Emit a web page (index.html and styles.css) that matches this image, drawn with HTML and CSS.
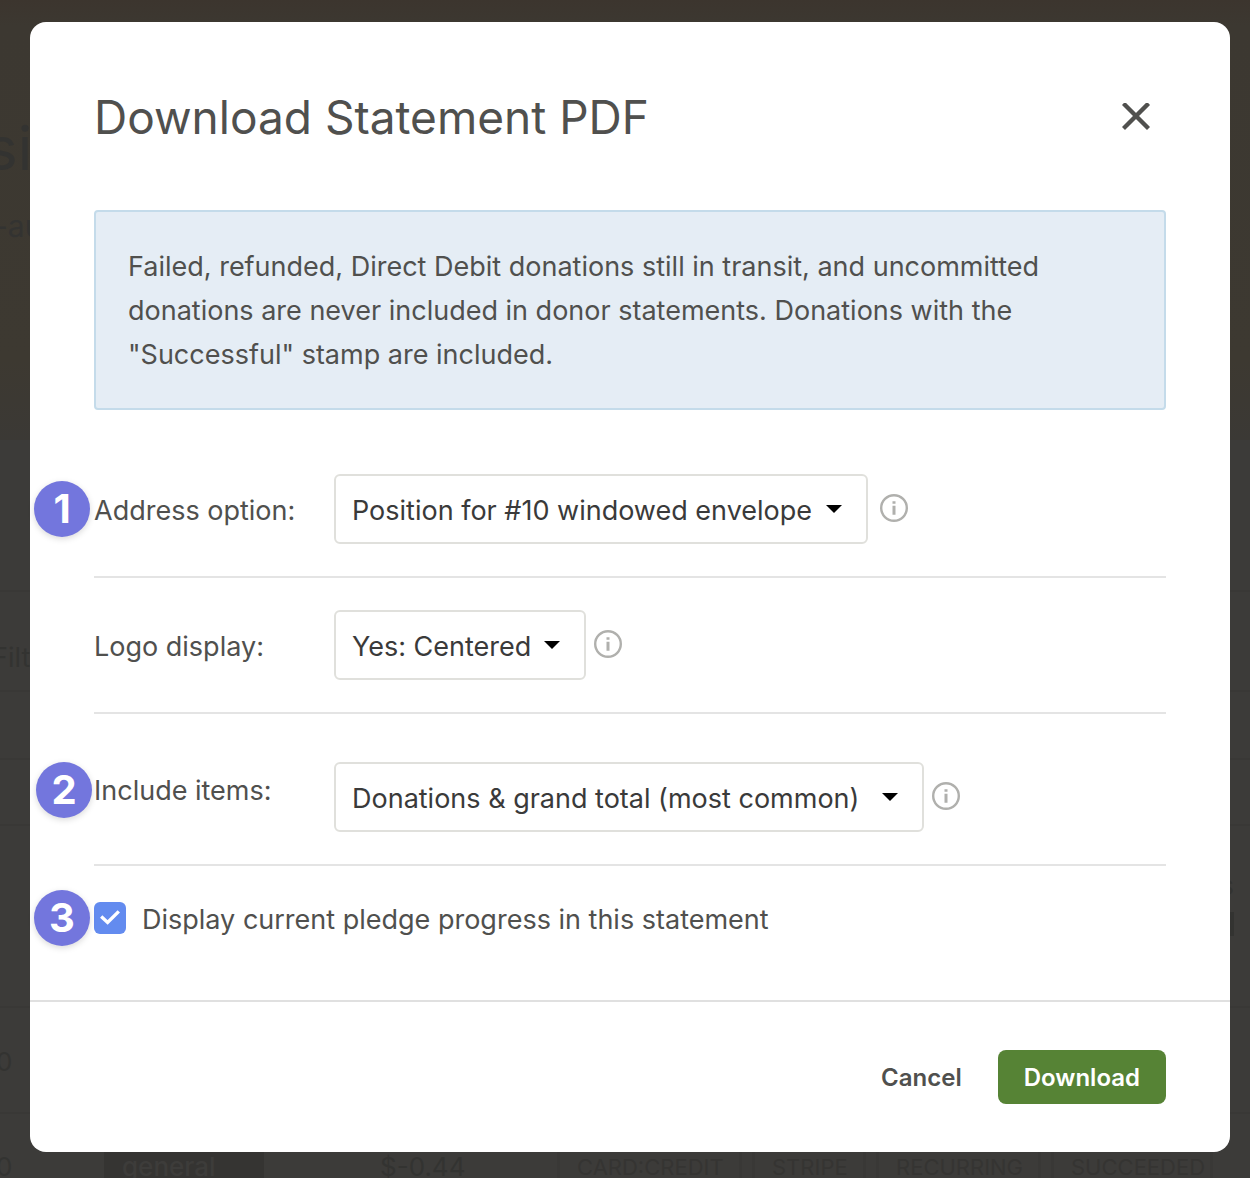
FILE: index.html
```html
<!DOCTYPE html>
<html lang="en">
<head>
<meta charset="utf-8">
<title>Download Statement PDF</title>
<link rel="stylesheet" href="styles.css">
</head>
<body>
<div class="screen">
  <div class="behind" aria-hidden="true">
    <div class="hero">
      <div class="hero-title">si</div>
      <div class="hero-sub">-au</div>
    </div>
    <div class="band band-filter">Filt</div>
    <div class="band band-tabs"></div>
    <div class="band band-head"></div>
    <div class="band band-summary"><span>s</span><span class="bar"></span></div>
    <div class="band band-row">0</div>
    <div class="band band-last">
      <span>0</span>
      <span class="fund">general</span>
      <span class="amount">$-0.44</span>
      <span class="tag">CARD:CREDIT</span>
      <span class="tag">STRIPE</span>
      <span class="tag">RECURRING</span>
      <span class="tag">SUCCEEDED</span>
    </div>
  </div>

  <form class="dialog" role="dialog" aria-labelledby="dialog-title">
    <header class="dialog-head">
      <h1 id="dialog-title">Download Statement PDF</h1>
      <button class="close" type="button" aria-label="Close">
        <svg width="28" height="28" viewBox="0 0 28 28"><path d="M3 2 25 24M25 2 3 24" fill="none" stroke="currentColor" stroke-width="4.4" stroke-linecap="square" stroke-linejoin="round"/></svg>
      </button>
    </header>

    <div class="dialog-body">
      <p class="notice">Failed, refunded, Direct Debit donations still in transit, and uncommitted donations are never included in donor statements. Donations with the "Successful" stamp are included.</p>

      <div class="row">
        <span class="step">1</span>
        <label class="row-label" for="address">Address option:</label>
        <div class="picker picker-address">
          <select id="address"><option>Position for #10 windowed envelope</option></select>
          <svg class="caret" width="16" height="8" viewBox="0 0 16 8"><path d="M0 0H16L8 8Z"/></svg>
        </div>
        <button class="info info-wide" type="button" aria-label="About address option">
          <svg width="28" height="28" viewBox="0 0 28 28"><circle cx="14" cy="14" r="12.8" fill="none" stroke="currentColor" stroke-width="2.4"/><path d="M12.5 7.2h3v2.6h-3zM12.5 11.8h3v9h-3z" fill="currentColor"/></svg>
        </button>
      </div>

      <div class="row">
        <label class="row-label" for="logo">Logo display:</label>
        <div class="picker picker-logo">
          <select id="logo"><option>Yes: Centered</option></select>
          <svg class="caret" width="16" height="8" viewBox="0 0 16 8"><path d="M0 0H16L8 8Z"/></svg>
        </div>
        <button class="info" type="button" aria-label="About logo display">
          <svg width="28" height="28" viewBox="0 0 28 28"><circle cx="14" cy="14" r="12.8" fill="none" stroke="currentColor" stroke-width="2.4"/><path d="M12.5 7.2h3v2.6h-3zM12.5 11.8h3v9h-3z" fill="currentColor"/></svg>
        </button>
      </div>

      <div class="row row-items">
        <span class="step">2</span>
        <label class="row-label" for="items">Include items:</label>
        <div class="picker picker-items">
          <select id="items"><option>Donations &amp; grand total (most common)</option></select>
          <svg class="caret" width="16" height="8" viewBox="0 0 16 8"><path d="M0 0H16L8 8Z"/></svg>
        </div>
        <button class="info" type="button" aria-label="About include items">
          <svg width="28" height="28" viewBox="0 0 28 28"><circle cx="14" cy="14" r="12.8" fill="none" stroke="currentColor" stroke-width="2.4"/><path d="M12.5 7.2h3v2.6h-3zM12.5 11.8h3v9h-3z" fill="currentColor"/></svg>
        </button>
      </div>

      <div class="row row-check">
        <span class="step">3</span>
        <span class="box">
          <input type="checkbox" id="pledge" checked>
          <svg class="tick" width="32" height="32" viewBox="0 0 32 32"><path d="M7.2 14.6 13.6 20.4 24.8 9.4" fill="none" stroke="#fff" stroke-width="3.4"/></svg>
        </span>
        <label for="pledge">Display current pledge progress in this statement</label>
      </div>
    </div>

    <footer class="dialog-foot">
      <button class="cancel" type="button">Cancel</button>
      <button class="download" type="submit">Download</button>
    </footer>
  </form>
</div>
</body>
</html>
```
FILE: styles.css
```css
* { box-sizing: border-box; }

body {
  margin: 0;
  background: #3c3b38;
  color: #50504e;
  font: 27px/44px Inter, "Liberation Sans", sans-serif;
}

button, select, input { font: inherit; color: inherit; margin: 0; }

button { border: 0; background: none; padding: 0; cursor: pointer; }

svg { display: block; }

.screen {
  display: grid;
  grid-template-columns: minmax(0, 1fr);
  min-height: 100vh;
}

.behind, .dialog { grid-area: 1 / 1; }

/* Dimmed page under the dialog */
.behind {
  display: flex;
  flex-direction: column;
  overflow: hidden;
  color: #333331;
  background: #3c3b39;
}

.hero {
  height: 440px;
  padding-top: 112px;
  background: linear-gradient(#3c352e, #3c3831 26px, #3d3931 360px, #3b3935);
}

.hero-title { font-size: 60px; line-height: 72px; margin-left: -14px; }

.hero-sub { font-size: 30px; margin: 20px 0 0 -6px; }

.band { border-top: 2px solid #393836; }

.band-filter {
  margin-top: 150px;
  height: 100px;
  padding-top: 44px;
  padding-left: 0;
  text-indent: -8px;
}

.band-tabs { height: 68px; }

.band-head { height: 66px; }

.band-summary {
  height: 182px;
  padding: 38px 16px 0 0;
  display: flex;
  flex-direction: column;
  align-items: flex-end;
}

.bar { width: 4px; height: 24px; margin-top: 4px; background: #333331; }

.band-row { height: 106px; padding-top: 32px; text-indent: -4px; font-size: 26px; }

.band-last {
  flex: 1 0 0;
  display: grid;
  grid-template-columns: 108px 160px 293px 195px 124px 175px 172px;
  height: 66px;
  margin-left: -4px;
  padding-top: 31px;
  font-size: 26px;
}

.fund { padding-left: 18px; font-weight: 500; color: #3d3c3a; background: #353432; }

.amount { padding-left: 116px; }

.tag {
  margin-right: 10px;
  padding-left: 17px;
  border: solid #393836;
  border-width: 0 3px;
  font-size: 22px;
  color: #353432;
}

/* Dialog */
.dialog {
  margin: 22px 20px 26px 30px;
  background: #fff;
  border-radius: 16px;
  position: relative;
  align-self: start;
}

.dialog-head {
  display: flex;
  justify-content: space-between;
  align-items: center;
  padding: 62px 80px 60px 64px;
}

h1 { margin: 0; font-size: 46px; line-height: 66px; font-weight: 400; }

.close { color: #50504e; }

.dialog-body { padding: 0 64px; }

.notice {
  margin: 0 0 32px;
  padding: 33px 32px 31px;
  min-height: 200px;
  border: 2px solid #c4dbea;
  border-radius: 4px;
  background: #e5edf5;
}

.row {
  position: relative;
  display: flex;
  align-items: center;
  padding: 32px 0;
  border-bottom: 2px solid #e4e4e4;
}

.row-label { flex: 0 0 240px; padding-top: 3px; }

.row-items { padding-top: 48px; }

.row-items .row-label { align-self: flex-start; padding-top: 7px; }

.row-check { gap: 16px; padding: 30px 0 60px; border: 0; }

.row-check label { padding-top: 2px; margin-bottom: -2px; }

.step {
  position: absolute;
  left: -60px;
  top: 39px;
  width: 56px;
  height: 56px;
  border-radius: 50%;
  background: #7376dd;
  box-shadow: 0 2px 6px rgba(0, 0, 0, 0.15);
  color: #fff;
  font-size: 40px;
  line-height: 56px;
  font-weight: 700;
  text-align: center;
}

.row-items .step { left: -58px; top: 48px; }

.row-check .step { top: 24px; }

.picker { display: grid; align-items: center; color: #3a3a3a; }

.picker > * { grid-area: 1 / 1; }

.picker-address { width: 534px; }

.picker-logo { width: 252px; }

.picker-items { width: 590px; }

select {
  appearance: none;
  width: 100%;
  height: 70px;
  padding: 4px 0 0 16px;
  border: 2px solid #e0e0dc;
  border-radius: 6px;
  background: #fff;
}

.caret { justify-self: end; margin-right: 26px; fill: #000; pointer-events: none; }

.info { margin-left: 8px; padding-bottom: 2px; color: #b0b0ad; }

.info-wide { margin-left: 12px; }

.box { display: grid; }

.box > * { grid-area: 1 / 1; }

.box input {
  appearance: none;
  width: 32px;
  height: 32px;
  border-radius: 6px;
  background: #638bef;
}

.tick { pointer-events: none; }

.dialog-foot {
  display: flex;
  justify-content: flex-end;
  align-items: center;
  gap: 36px;
  padding: 48px 64px;
  border-top: 2px solid #e0e0e0;
}

.cancel, .download {
  padding: 2px 0 0;
  font-size: 24px;
  line-height: 52px;
  font-weight: 600;
}

.download {
  padding: 2px 26px 0;
  border-radius: 8px;
  background: #568335;
  color: #fff;
}
```
